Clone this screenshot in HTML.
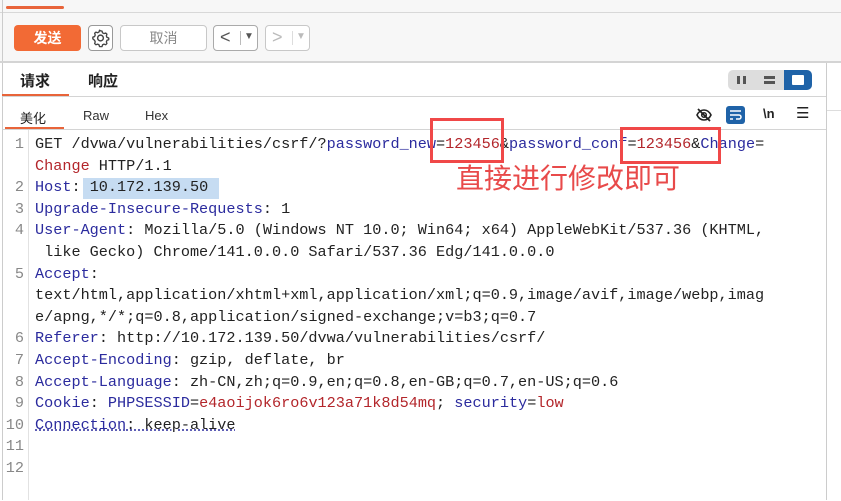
<!DOCTYPE html>
<html><head><meta charset="utf-8"><style>
*{margin:0;padding:0;box-sizing:border-box}
body{width:841px;height:500px;overflow:hidden;background:#fff;font-family:"Liberation Sans","Noto Sans CJK SC",sans-serif;position:relative}
.a{position:absolute}
.btn{position:absolute;border:1px solid #c8c8c8;border-radius:4px;background:#fff;color:#888;font-size:14px;text-align:center}
.code{position:absolute;left:0;top:134px;font-family:"Liberation Mono","Noto Sans CJK SC",monospace;font-size:15.2px;line-height:21.6px;white-space:pre}
.ln{position:absolute;left:0;width:24px;text-align:right;color:#888}
.tx{position:absolute;left:35px}
.k{color:#2b2b9e}.v{color:#b3262b}.p{color:#222}
</style></head><body>
<div class="a" style="left:0;top:0;width:841px;height:12px;background:#f7f7f7"></div>
<div class="a" style="left:6px;top:6px;width:58px;height:3px;background:#e8643a;border-radius:2px"></div>
<div class="a" style="left:0;top:12px;width:841px;height:1px;background:#d8d8d8"></div>
<div class="a" style="left:0;top:13px;width:841px;height:49px;background:#f7f7f7"></div>
<div class="a" style="left:2px;top:0;width:1px;height:500px;background:#ccc"></div>
<div class="a" style="left:14px;top:25px;width:67px;height:26px;background:#f26a35;border-radius:4px;color:#fff;font-size:14px;font-weight:bold;text-align:center;line-height:26px">发送</div>
<div class="btn" style="left:88px;top:25px;width:25px;height:26px;border-color:#999">
<svg width="23" height="24" viewBox="0 0 24 24" style="position:absolute;left:0;top:0"><circle cx="12" cy="12" r="3" fill="none" stroke="#444" stroke-width="1.5"/><path d="M12 4.5l1.6.3.5 1.8 1.5.8 1.8-.6 1.3 1.2-.6 1.8.7 1.6 1.8.6v1.8l-1.8.6-.7 1.6.6 1.8-1.3 1.2-1.8-.6-1.5.8-.5 1.8H11l-.5-1.8-1.5-.8-1.8.6-1.3-1.2.6-1.8-.7-1.6L4 12.9v-1.8l1.8-.6.7-1.6-.6-1.8 1.300-1.2 1.8.6 1.5-.8.5-1.8z" fill="none" stroke="#444" stroke-width="1.4" stroke-linejoin="round"/></svg></div>
<div class="btn" style="left:120px;top:25px;width:87px;height:26px;line-height:24px">取消</div>
<div class="btn" style="left:213px;top:25px;width:45px;height:26px;border-color:#aaa;color:#555;line-height:22px;font-size:18px;text-align:left;padding-left:6px">&lt;<span style="position:absolute;left:26px;top:5px;width:1px;height:14px;background:#bbb"></span><span style="position:absolute;left:30px;top:0;font-size:10px">▼</span></div>
<div class="btn" style="left:265px;top:25px;width:45px;height:26px;color:#bbb;line-height:22px;font-size:18px;text-align:left;padding-left:6px">&gt;<span style="position:absolute;left:26px;top:5px;width:1px;height:14px;background:#ddd"></span><span style="position:absolute;left:30px;top:0;font-size:10px">▼</span></div>
<div class="a" style="left:0;top:61px;width:841px;height:2px;background:#d4d4d4"></div>
<div class="a" style="left:826px;top:63px;width:1px;height:437px;background:#ccc"></div>
<div class="a" style="left:827px;top:110px;width:14px;height:1px;background:#ddd"></div>
<div class="a" style="left:20px;top:70px;font-size:15px;font-weight:bold;color:#222">请求</div>
<div class="a" style="left:88px;top:70px;font-size:15px;font-weight:bold;color:#222">响应</div>
<div class="a" style="left:2px;top:94px;width:67px;height:2px;background:#e8643a"></div>
<div class="a" style="left:3px;top:96px;width:823px;height:1px;background:#d4d4d4"></div>
<div class="a" style="left:728px;top:70px;width:84px;height:20px;background:#ddd;border-radius:5px"></div>
<div class="a" style="left:737px;top:76px;width:3px;height:8px;background:#555"></div><div class="a" style="left:743px;top:76px;width:3px;height:8px;background:#555"></div>
<div class="a" style="left:764px;top:76px;width:11px;height:3px;background:#555"></div><div class="a" style="left:764px;top:81px;width:11px;height:3px;background:#555"></div>
<div class="a" style="left:784px;top:70px;width:28px;height:20px;background:#1f63a8;border-radius:0 5px 5px 0"></div>
<div class="a" style="left:792px;top:75px;width:12px;height:10px;background:#fff;border-radius:1px"></div>
<div class="a" style="left:20px;top:108px;font-size:13px;color:#222">美化</div>
<div class="a" style="left:83px;top:108px;font-size:13px;color:#333">Raw</div>
<div class="a" style="left:145px;top:108px;font-size:13px;color:#333">Hex</div>
<div class="a" style="left:5px;top:127px;width:59px;height:2px;background:#e8643a"></div>
<div class="a" style="left:3px;top:129px;width:823px;height:1px;background:#d4d4d4"></div>
<svg class="a" style="left:695px;top:107px" width="18" height="16" viewBox="0 0 18 16"><path d="M2 8c2-4 5-5 7-5s5 1 7 5c-2 4-5 5-7 5s-5-1-7-5z" fill="none" stroke="#222" stroke-width="1.6"/><circle cx="9" cy="8" r="2.3" fill="none" stroke="#222" stroke-width="1.5"/><path d="M3 2l12 12" stroke="#222" stroke-width="1.8"/></svg>
<div class="a" style="left:726px;top:106px;width:19px;height:18px;background:#1f63a8;border-radius:3px"></div>
<svg class="a" style="left:728px;top:108px" width="15" height="14" viewBox="0 0 15 14"><path d="M2 3h11M2 7h9a2 2 0 010 4H8M2 11h3" fill="none" stroke="#fff" stroke-width="1.5"/></svg>
<div class="a" style="left:763px;top:106px;font-size:13px;font-weight:bold;color:#222">\n</div>
<div class="a" style="left:796px;top:104px;font-size:15px;color:#222">☰</div>
<div class="a" style="left:28px;top:130px;width:1px;height:370px;background:#e2e2e2"></div>
<div class="a" style="left:83px;top:178px;width:136px;height:21px;background:#c6dcf2"></div>
<div class="code">
<div class="ln" style="top:0">1</div><div class="tx" style="top:0"><span class="p">GET /dvwa/vulnerabilities/csrf/?</span><span class="k">password_new</span><span class="p">=</span><span class="v">123456</span><span class="p">&amp;</span><span class="k">password_conf</span><span class="p">=</span><span class="v">123456</span><span class="p">&amp;</span><span class="k">Change</span><span class="p">=</span></div>
<div class="tx" style="top:21.6px"><span class="v">Change</span><span class="p"> HTTP/1.1</span></div>
<div class="ln" style="top:43.2px">2</div><div class="tx" style="top:43.2px"><span class="k">Host</span><span class="p">: 10.172.139.50</span></div>
<div class="ln" style="top:64.8px">3</div><div class="tx" style="top:64.8px"><span class="k">Upgrade-Insecure-Requests</span><span class="p">: 1</span></div>
<div class="ln" style="top:86.4px">4</div><div class="tx" style="top:86.4px"><span class="k">User-Agent</span><span class="p">: Mozilla/5.0 (Windows NT 10.0; Win64; x64) AppleWebKit/537.36 (KHTML,</span></div>
<div class="tx" style="top:108px"><span class="p"> like Gecko) Chrome/141.0.0.0 Safari/537.36 Edg/141.0.0.0</span></div>
<div class="ln" style="top:129.6px">5</div><div class="tx" style="top:129.6px"><span class="k">Accept</span><span class="p">:</span></div>
<div class="tx" style="top:151.2px"><span class="p">text/html,application/xhtml+xml,application/xml;q=0.9,image/avif,image/webp,imag</span></div>
<div class="tx" style="top:172.8px"><span class="p">e/apng,*/*;q=0.8,application/signed-exchange;v=b3;q=0.7</span></div>
<div class="ln" style="top:194.4px">6</div><div class="tx" style="top:194.4px"><span class="k">Referer</span><span class="p">: http://10.172.139.50/dvwa/vulnerabilities/csrf/</span></div>
<div class="ln" style="top:216px">7</div><div class="tx" style="top:216px"><span class="k">Accept-Encoding</span><span class="p">: gzip, deflate, br</span></div>
<div class="ln" style="top:237.6px">8</div><div class="tx" style="top:237.6px"><span class="k">Accept-Language</span><span class="p">: zh-CN,zh;q=0.9,en;q=0.8,en-GB;q=0.7,en-US;q=0.6</span></div>
<div class="ln" style="top:259.2px">9</div><div class="tx" style="top:259.2px"><span class="k">Cookie</span><span class="p">: </span><span class="k">PHPSESSID</span><span class="p">=</span><span class="v">e4aoijok6ro6v123a71k8d54mq</span><span class="p">; </span><span class="k">security</span><span class="p">=</span><span class="v">low</span></div>
<div class="ln" style="top:280.8px">10</div><div class="tx" style="top:280.8px;text-decoration:underline dotted #2b2b9e"><span class="k">Connection</span><span class="p">: keep-alive</span></div>
<div class="ln" style="top:302.4px">11</div>
<div class="ln" style="top:324px">12</div>
</div>
<div class="a" style="left:430px;top:118px;width:74px;height:45px;border:3.5px solid #f04848"></div>
<div class="a" style="left:620px;top:127px;width:101px;height:37px;border:3.5px solid #f04848"></div>
<div class="a" style="left:456px;top:158px;font-size:28px;color:#e84a4a;font-family:'Noto Sans CJK SC',sans-serif;line-height:38px">直接进行修改即可</div>
</body></html>
